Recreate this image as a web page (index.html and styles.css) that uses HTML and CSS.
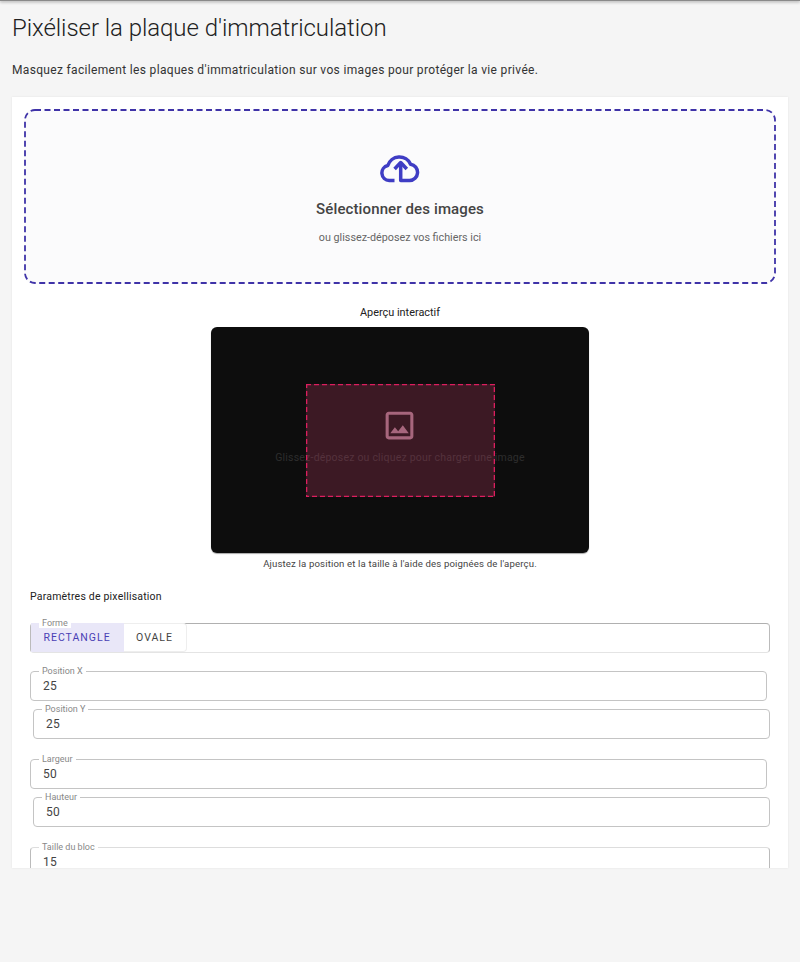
FILE: index.html
```html
<!DOCTYPE html>
<html lang="fr">
<head>
    <meta charset="utf-8">
    <title>Pixéliser la plaque d'immatriculation</title>
    <link rel="stylesheet" href="styles.css">
</head>
<body>
    <div class="top-shadow"></div>

    <h1 class="page-title">Pixéliser la plaque d'immatriculation</h1>
    <p class="page-desc">Masquez facilement les plaques d'immatriculation sur vos images pour protéger la vie privée.</p>

    <div class="card">
        <div class="dropzone">
            <svg class="dropzone-border"><rect x="1" y="1" rx="10" ry="10"/></svg>
            <svg class="cloud-icon" viewBox="0 0 40 30" width="40" height="30">
                <path d="M14.5 27.5H9.2a7.6 7.6 0 0 1-1.4-15A12.2 12.2 0 0 1 30.6 11.2a8.2 8.2 0 0 1-1 16.3h-8.9V10"/>
                <path d="M14.6 16l6.1-6.5 6.1 6.5"/>
            </svg>
            <div class="dropzone-title">Sélectionner des images</div>
            <div class="dropzone-sub">ou glissez-déposez vos fichiers ici</div>
        </div>

        <div class="preview-title">Aperçu interactif</div>
        <div class="preview">
            <div class="preview-empty">
                <svg class="image-icon" viewBox="0 0 24 24" width="37" height="37">
                    <path fill="currentColor" d="M19 5v14H5V5h14m0-2H5c-1.1 0-2 .9-2 2v14c0 1.1.9 2 2 2h14c1.1 0 2-.9 2-2V5c0-1.1-.9-2-2-2zm-4.86 8.86-3 3.87L9 13.14 6 17h12l-3.86-5.14z"/>
                </svg>
                <div class="preview-text">Glissez-déposez ou cliquez pour charger une image</div>
            </div>
            <svg class="selection"><rect width="100%" height="100%"/></svg>
        </div>
        <div class="preview-caption">Ajustez la position et la taille à l'aide des poignées de l'aperçu.</div>

        <div class="section-title">Paramètres de pixellisation</div>

        <fieldset class="shape-field">
            <legend>Forme</legend>
            <div class="toggle-group">
                <button class="toggle active">RECTANGLE</button>
                <button class="toggle">OVALE</button>
            </div>
        </fieldset>

        <div class="field-pair">
            <fieldset class="field field-left">
                <legend>Position X</legend>
                <div class="value">25</div>
            </fieldset>
            <fieldset class="field field-right">
                <legend>Position Y</legend>
                <div class="value">25</div>
            </fieldset>
        </div>

        <div class="field-pair">
            <fieldset class="field field-left">
                <legend>Largeur</legend>
                <div class="value">50</div>
            </fieldset>
            <fieldset class="field field-right">
                <legend>Hauteur</legend>
                <div class="value">50</div>
            </fieldset>
        </div>

        <fieldset class="field field-full">
            <legend>Taille du bloc</legend>
            <div class="value">15</div>
        </fieldset>
    </div>
</body>
</html>
```

FILE: styles.css
```css
* {
    box-sizing: border-box;
}

body {
    margin: 0;
    padding: 0 12px;
    min-height: 962px;
    background: #f5f5f5;
    color: #212121;
    font-family: Roboto, "Liberation Sans", sans-serif;
    overflow: hidden;
}

.top-shadow {
    position: absolute;
    top: 0;
    left: 0;
    width: 100%;
    height: 1px;
    background: #8a8a8a;
    box-shadow: 0 1px 3px rgba(0, 0, 0, 0.55);
}

.page-title {
    margin: 0;
    padding-top: 14px;
    font-size: 24px;
    font-weight: 300;
    line-height: 28px;
    letter-spacing: -0.06px;
}

.page-desc {
    margin: 19px 0 0;
    font-size: 12px;
    line-height: 18px;
    letter-spacing: 0.33px;
    color: #333;
}

.card {
    margin-top: 18px;
    height: 771px;
    padding: 12px;
    background: #fff;
    box-shadow: 0 0 2px rgba(0, 0, 0, 0.08);
    overflow: hidden;
}

.dropzone {
    position: relative;
    height: 175px;
    padding-top: 44px;
    display: flex;
    flex-direction: column;
    align-items: center;
    border-radius: 10px;
    background: #fbfbfc;
}

.dropzone-border {
    position: absolute;
    top: 0;
    left: 0;
    width: 100%;
    height: 100%;
}

.dropzone-border rect {
    width: calc(100% - 2px);
    height: calc(100% - 2px);
    fill: none;
    stroke: #3f33a8;
    stroke-width: 1.8;
    stroke-dasharray: 6 3.5;
}

.cloud-icon {
    display: block;
    fill: none;
    stroke: #3f3dc4;
    stroke-width: 3.5;
    stroke-linejoin: round;
}

.dropzone-title {
    margin-top: 16px;
    font-size: 15px;
    font-weight: 500;
    line-height: 20px;
    letter-spacing: 0.12px;
    color: #444;
}

.dropzone-sub {
    margin-top: 11px;
    font-size: 10.75px;
    line-height: 16px;
    color: #666;
}

.preview-title {
    margin-top: 22px;
    font-size: 10.9px;
    line-height: 14px;
    text-align: center;
    color: #222;
}

.preview {
    position: relative;
    width: 378px;
    height: 226px;
    margin: 7px auto 0;
    background: #0d0d0d;
    border-radius: 6px;
    box-shadow: 0 1px 1px rgba(0, 0, 0, 0.35);
    display: flex;
    align-items: center;
    justify-content: center;
}

.preview-empty {
    display: flex;
    flex-direction: column;
    align-items: center;
    padding-bottom: 8px;
}

.image-icon {
    color: #96707f;
    display: block;
}

.preview-text {
    margin-top: 7px;
    font-size: 10.5px;
    line-height: 14px;
    letter-spacing: 0.2px;
    color: #2d2d2d;
}

.selection {
    position: absolute;
    left: 25%;
    top: 25%;
    width: 50%;
    height: 50%;
}

.selection rect {
    fill: rgba(226, 70, 120, 0.22);
    stroke: #dc1e5e;
    stroke-width: 2.6;
    stroke-dasharray: 5 3;
}

.preview-caption {
    margin-top: 4px;
    font-size: 9.6px;
    line-height: 14px;
    letter-spacing: 0.15px;
    text-align: center;
    color: #444;
}

.section-title {
    margin: 19px 0 0 6px;
    font-size: 10.5px;
    font-weight: 400;
    line-height: 14px;
    letter-spacing: 0.2px;
    color: #222;
}

fieldset {
    margin: 0;
    min-width: 0;
    border-radius: 4px;
}

legend {
    font-size: 9px;
    line-height: 10px;
    color: #888;
    padding: 0 3px;
}

.shape-field {
    margin: 14px 6px 0;
    height: 35px;
    padding: 0;
    border: 1px solid #bbb;
    border-top-color: #b0b0b0;
    border-bottom-color: #e4e4e4;
}

.shape-field legend {
    position: relative;
    z-index: 1;
    margin-left: 8px;
    background: #fff;
}

.toggle-group {
    display: flex;
    margin-top: -5px;
}

.toggle {
    height: 29px;
    padding: 0 13px 0 12.5px;
    border: none;
    background: #fff;
    font-family: inherit;
    font-size: 10.5px;
    font-weight: 400;
    letter-spacing: 1px;
    color: #444;
    cursor: pointer;
}

.toggle.active {
    background: #e9e7f8;
    color: #4a3fb5;
}

.toggle:last-child {
    border: 1px solid #eee;
    border-left: none;
    border-radius: 0 4px 4px 0;
}

.field-pair {
    display: flex;
    flex-direction: column;
    gap: 3px;
    margin-top: 13px;
}

.field-pair + .field-pair {
    margin-top: 15px;
}

.field {
    height: 35px;
    padding: 0 12px;
    border: 1px solid #c4c4c4;
}

.field legend {
    margin-left: -4px;
}

.field-left {
    margin: 0 9px 0 6px;
}

.field-right {
    margin: 0 6px 0 9px;
}

.field-full {
    margin: 15px 6px 0;
    height: 40px;
    border-color: #ddd #bbb;
}

.value {
    padding-top: 1px;
    font-size: 12px;
    line-height: 18px;
    letter-spacing: 0.2px;
    color: #444;
}
```
